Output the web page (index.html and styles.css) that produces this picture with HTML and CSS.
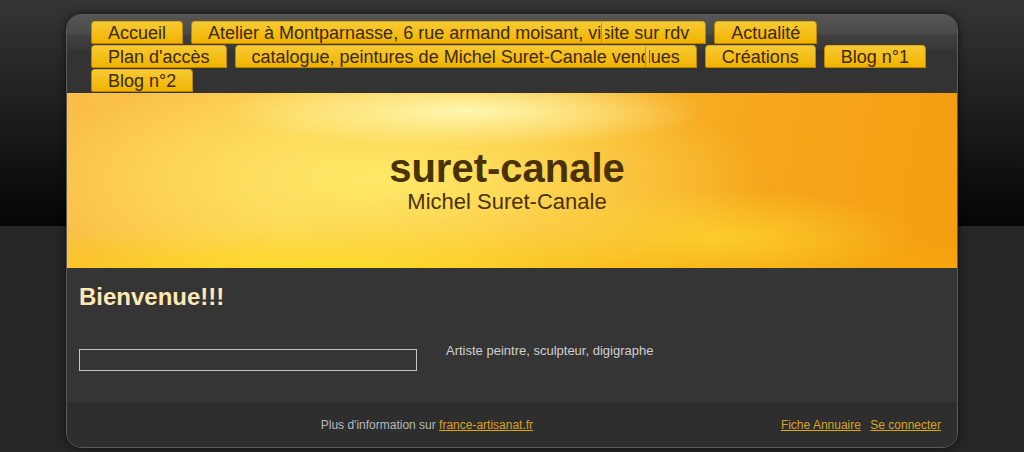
FILE: index.html
```html
<!DOCTYPE html>
<html lang="fr">
<head>
    <meta charset="UTF-8">
    <meta name="viewport" content="width=device-width, initial-scale=1.0">
    <title>suret-canale</title>
    <link rel="stylesheet" href="styles.css">
</head>
<body>

<div class="site">
    <!-- Menu -->
    <ul class="menu">
        <li><a href="#">Accueil</a></li>
        <li class="long"><a href="#">Atelier à Montparnasse, 6 rue armand moisant, visite sur rdv</a></li>
        <li><a href="#">Actualité</a></li>
        <li><a href="#">Plan d'accès</a></li>
        <li class="long"><a href="#">catalogue, peintures de Michel Suret-Canale vendues</a></li>
        <li><a href="#">Créations</a></li>
        <li><a href="#">Blog n°1</a></li>
        <li><a href="#">Blog n°2</a></li>
    </ul>

    <!-- Banner -->
    <div class="banner">
        <div class="site-title">suret-canale</div>
        <div class="site-slogan">Michel Suret-Canale</div>
    </div>

    <!-- Content -->
    <div class="content">
        <h1>Bienvenue!!!</h1>
        <div class="columns">
            <div class="col-left">
                <div class="frame"></div>
            </div>
            <div class="col-right">
                <p>Artiste peintre, sculpteur, digigraphe</p>
            </div>
        </div>
    </div>

    <!-- Footer -->
    <div class="footer">
        <div class="footer-info">Plus d'information sur <a href="#">france-artisanat.fr </a></div>
        <div class="footer-links">
            <a href="#">Fiche Annuaire</a>
            <a href="#">Se connecter </a>
        </div>
    </div>
</div>

</body>
</html>
```

FILE: styles.css
```css
body {
    margin: 0;
    padding: 14px 0 0;
    font-family: "Liberation Sans", Arial, sans-serif;
    background: linear-gradient(to bottom, #353535 0, #050505 226px, #262626 226px, #262626 100%);
    min-height: 452px;
    box-sizing: border-box;
}

.site {
    width: 890px;
    margin: 0 auto;
    border: 1px solid #5a5a5a;
    border-radius: 15px;
    overflow: hidden;
    background: #353535;
    box-shadow: 0 0 8px rgba(0, 0, 0, 0.6);
}

/* Menu */
.menu {
    list-style: none;
    margin: 0;
    padding: 6px 22px 1px 24px;
    display: flex;
    flex-wrap: wrap;
    column-gap: 8px;
    row-gap: 1px;
    background: linear-gradient(to bottom, #565656 0, #4a4a4a 19px, #3f3f3f 20px, #383838 35px, #333 36px, #333 100%);
}

.menu li {
    position: relative;
}

.menu a {
    display: block;
    height: 21px;
    line-height: 22px;
    padding: 0 16px;
    font-size: 18px;
    color: #3b2900;
    text-decoration: none;
    background: linear-gradient(to bottom, #f7ca33, #f1b300);
    border: 1px solid #b98700;
    border-top-color: #e0a90f;
    border-radius: 4px 4px 0 2px;
}

.menu li.long::after {
    content: '';
    position: absolute;
    left: 410px;
    top: 1px;
    bottom: 1px;
    width: 3px;
    border-left: 1px solid #c69200;
    border-top-left-radius: 3px;
    background: linear-gradient(to bottom, #f9d04a, #f1b300);
}

/* Banner */
.banner {
    height: 175px;
    box-sizing: border-box;
    padding: 52px 10px 0 0;
    text-align: center;
    color: #4a3100;
    background:
        radial-gradient(ellipse 240px 36px at 400px 18px, rgba(255, 250, 180, 0.95), rgba(255, 250, 180, 0) 100%),
        radial-gradient(ellipse 420px 70px at 250px 195px, rgba(255, 232, 40, 0.9), rgba(255, 232, 40, 0) 100%),
        radial-gradient(ellipse 380px 110px at 320px 85px, rgba(255, 240, 110, 0.85), rgba(255, 240, 110, 0) 100%),
        radial-gradient(ellipse 200px 50px at 650px 145px, rgba(255, 220, 50, 0.7), rgba(255, 220, 50, 0) 100%),
        linear-gradient(to bottom, rgba(246, 170, 10, 0) 80%, rgba(246, 170, 10, 0.5) 100%),
        linear-gradient(100deg, #fabd45 0%, #fbcb50 25%, #f9b830 55%, #f6a71c 75%, #f49e10 100%);
}

.site-title {
    font-size: 40px;
    font-weight: bold;
    line-height: 46px;
}

.site-slogan {
    font-size: 22px;
    line-height: 22px;
}

/* Content */
.content {
    padding: 14px 12px 31px;
    background: #353535;
}

h1 {
    margin: 0 0 32px;
    font-size: 24px;
    line-height: 30px;
    color: #ffe8b4;
}

.columns {
    display: grid;
    grid-template-columns: 338px 1fr;
    column-gap: 29px;
}

.frame {
    height: 20px;
    margin-top: 5px;
    border: 1px solid #c4c4c4;
}

.col-right p {
    margin: 0;
    font-size: 13px;
    line-height: 14px;
    color: #d0d0d0;
}

/* Footer */
.footer {
    display: flex;
    align-items: center;
    height: 44px;
    padding: 1px 16px 0 12px;
    background: #2e2e2e;
    font-size: 12px;
    color: #b8b8b8;
}

.footer-info {
    flex: 1;
    text-align: center;
}

.footer a {
    color: #d9a521;
}

.footer-links a {
    margin-left: 6px;
}
```
